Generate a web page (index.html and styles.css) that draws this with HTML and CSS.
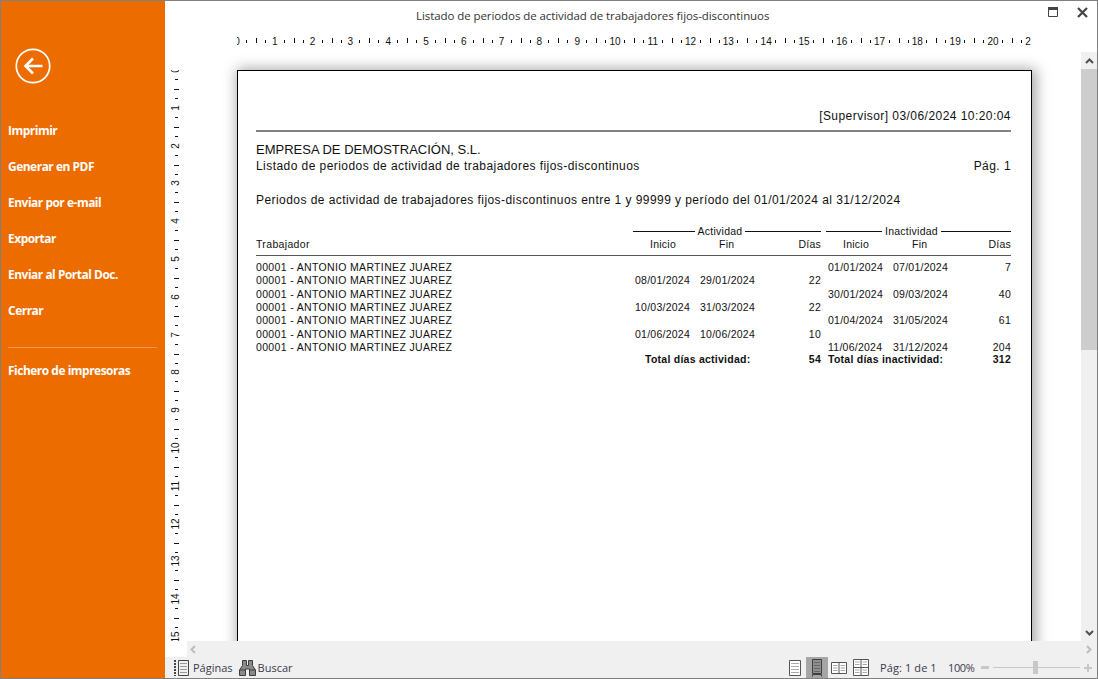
FILE: index.html
```html
<!DOCTYPE html>
<html lang="es">
<head>
<meta charset="utf-8">
<title>Listado de periodos</title>
<link rel="stylesheet" href="styles.css">
</head>
<body>
<div class="window">
  <aside class="sidebar">
    <button class="back" aria-label="Volver">
      <svg width="36" height="36" viewBox="0 0 36 36"><circle cx="18" cy="18" r="16.7" fill="none" stroke="#fff" stroke-width="1.7"/><path d="M27.5 18H10.5M18 10.5L10.5 18L18 25.5" fill="none" stroke="#fff" stroke-width="2.6"/></svg>
    </button>
    <nav class="menu">
      <a>Imprimir</a>
      <a>Generar en PDF</a>
      <a>Enviar por e-mail</a>
      <a>Exportar</a>
      <a>Enviar al Portal Doc.</a>
      <a>Cerrar</a>
      <hr class="menu-sep">
      <a>Fichero de impresoras</a>
    </nav>
  </aside>
  <main class="main">
    <header class="titlebar">
      <span class="title">Listado de periodos de actividad de trabajadores fijos-discontinuos</span>
      <div class="winbtns">
        <svg width="10" height="10" viewBox="0 0 10 10"><path d="M.5 .5H9.5V9.5H.5Z" fill="none" stroke="#444"/><path d="M0 0H10V3H0Z" fill="#444"/></svg>
        <svg width="11" height="11" viewBox="0 0 11 11"><path d="M1 1L10 10M10 1L1 10" stroke="#444" stroke-width="2.2"/></svg>
      </div>
    </header>
    <div class="hruler-row">
      <div class="hruler">
        <div class="cm"><span>0</span></div><div class="cm"><span>1</span></div><div class="cm"><span>2</span></div><div class="cm"><span>3</span></div><div class="cm"><span>4</span></div><div class="cm"><span>5</span></div><div class="cm"><span>6</span></div><div class="cm"><span>7</span></div><div class="cm"><span>8</span></div><div class="cm"><span>9</span></div><div class="cm"><span>10</span></div><div class="cm"><span>11</span></div><div class="cm"><span>12</span></div><div class="cm"><span>13</span></div><div class="cm"><span>14</span></div><div class="cm"><span>15</span></div><div class="cm"><span>16</span></div><div class="cm"><span>17</span></div><div class="cm"><span>18</span></div><div class="cm"><span>19</span></div><div class="cm"><span>20</span></div><div class="cm"><span>21</span></div>
      </div>
    </div>
    <div class="viewer">
      <div class="vruler">
        <div class="vcm"><span>0</span></div><div class="vcm"><span>1</span></div><div class="vcm"><span>2</span></div><div class="vcm"><span>3</span></div><div class="vcm"><span>4</span></div><div class="vcm"><span>5</span></div><div class="vcm"><span>6</span></div><div class="vcm"><span>7</span></div><div class="vcm"><span>8</span></div><div class="vcm"><span>9</span></div><div class="vcm"><span>10</span></div><div class="vcm"><span>11</span></div><div class="vcm"><span>12</span></div><div class="vcm"><span>13</span></div><div class="vcm"><span>14</span></div><div class="vcm"><span>15</span></div>
      </div>
      <section class="canvas">
        <article class="page">
          <div class="stamp">[Supervisor] 03/06/2024 10:20:04</div>
          <div class="company">EMPRESA DE DEMOSTRACIÓN, S.L.</div>
          <div class="listing"><span>Listado de periodos de actividad de trabajadores fijos-discontinuos</span><span>Pág. 1</span></div>
          <div class="subtitle">Periodos de actividad de trabajadores fijos-discontinuos entre 1 y 99999 y período del 01/01/2024 al 31/12/2024</div>
          <div class="table">
            <div class="groups">
              <div class="group group-a"><span>Actividad</span></div>
              <div class="group group-b"><span>Inactividad</span></div>
            </div>
            <div class="row head">
              <span>Trabajador</span>
              <span class="c">Inicio</span><span class="c fin">Fin</span><span class="r">Días</span><i></i>
              <span class="c">Inicio</span><span class="c fin">Fin</span><span class="r">Días</span>
            </div>
            <div class="rows">
              <div class="row"><span>00001 - ANTONIO MARTINEZ JUAREZ</span><span></span><span></span><span></span><i></i><span>01/01/2024</span><span>07/01/2024</span><span class="r">7</span></div>
              <div class="row"><span>00001 - ANTONIO MARTINEZ JUAREZ</span><span>08/01/2024</span><span>29/01/2024</span><span class="r">22</span><i></i><span></span><span></span><span></span></div>
              <div class="row"><span>00001 - ANTONIO MARTINEZ JUAREZ</span><span></span><span></span><span></span><i></i><span>30/01/2024</span><span>09/03/2024</span><span class="r">40</span></div>
              <div class="row"><span>00001 - ANTONIO MARTINEZ JUAREZ</span><span>10/03/2024</span><span>31/03/2024</span><span class="r">22</span><i></i><span></span><span></span><span></span></div>
              <div class="row"><span>00001 - ANTONIO MARTINEZ JUAREZ</span><span></span><span></span><span></span><i></i><span>01/04/2024</span><span>31/05/2024</span><span class="r">61</span></div>
              <div class="row"><span>00001 - ANTONIO MARTINEZ JUAREZ</span><span>01/06/2024</span><span>10/06/2024</span><span class="r">10</span><i></i><span></span><span></span><span></span></div>
              <div class="row"><span>00001 - ANTONIO MARTINEZ JUAREZ</span><span></span><span></span><span></span><i></i><span>11/06/2024</span><span>31/12/2024</span><span class="r">204</span></div>
            </div>
            <div class="totals">
              <span class="tot-a">Total días actividad:</span><span class="r">54</span><i></i>
              <span class="tot-b">Total días inactividad:</span><span class="r">312</span>
            </div>
          </div>
        </article>
      </section>
      <div class="vscroll">
        <div class="sbtn"><svg width="9" height="6" viewBox="0 0 9 6"><path d="M1 5L4.5 1.5L8 5" fill="none" stroke="#505050" stroke-width="2"/></svg></div>
        <div class="vtrack"><div class="vthumb"></div></div>
        <div class="sbtn"><svg width="9" height="6" viewBox="0 0 9 6"><path d="M1 1L4.5 4.5L8 1" fill="none" stroke="#505050" stroke-width="2"/></svg></div>
      </div>
    </div>
    <div class="hscroll-row">
      <div class="hscroll-gap"></div>
      <div class="hscroll">
        <svg width="6" height="9" viewBox="0 0 6 9"><path d="M5 1L1.5 4.5L5 8" fill="none" stroke="#bdbdbd" stroke-width="2"/></svg>
        <svg width="6" height="9" viewBox="0 0 6 9"><path d="M1 1L4.5 4.5L1 8" fill="none" stroke="#bdbdbd" stroke-width="2"/></svg>
      </div>
    </div>
    <footer class="status">
      <div class="tool pages-tool">
        <svg width="15" height="16" viewBox="0 0 15 16"><path d="M1 0V16" stroke="#444" stroke-width="2" stroke-dasharray="2 1"/><path d="M4.5 .5H14.5V15.5H4.5Z" fill="none" stroke="#444"/><path d="M6 3.5H13M6 6.500H13M6 9.500H13M6 12.500H13" stroke="#999"/></svg>
        <span>Páginas</span>
      </div>
      <div class="tool find-tool">
        <svg width="17" height="16" viewBox="0 0 17 16"><path d="M3.500 .5H7.500V5.500H9.500V.5H13.500V5.500L16.500 10V15.500H10.500V9H6.500V15.500H.5V10L3.500 5.500Z" fill="#8a8a8a" stroke="#3c3c3c"/><path d="M1 10H6M11 10H16" stroke="#3c3c3c"/></svg>
        <span>Buscar</span>
      </div>
      <div class="views">
        <div class="view">
          <svg width="12" height="16" viewBox="0 0 12 16"><path d="M.5 .5H11.500V15.500H.5Z" fill="#fff" stroke="#555"/><path d="M2 3.500H10M2 6.500H10M2 9.500H10M2 12.500H10" stroke="#aaa"/></svg>
        </div>
        <div class="view active">
          <svg width="10" height="18" viewBox="0 0 10 18"><path d="M.5 .5H9.500V14.500H.5Z" fill="#8f8f8f" stroke="#3e3e3e"/><path d="M2 3.500H8M2 6.500H8M2 9.500H8M2 12.500H8" stroke="#666"/><path d="M.5 17.500V15.500H9.500V17.500" fill="none" stroke="#3e3e3e"/></svg>
        </div>
        <div class="view">
          <svg width="16" height="12" viewBox="0 0 16 12"><path d="M.5 .5H15.500V11.500H.5ZM8 .5V11.500" fill="#fff" stroke="#555"/><path d="M2 3.500H6.500M2 6H6.500M2 8.500H6.500M9.500 3.500H14M9.500 6H14M9.500 8.500H14" stroke="#aaa"/></svg>
        </div>
        <div class="view">
          <svg width="16" height="17" viewBox="0 0 16 17"><path d="M.5 .5H15.500V16.500H.5ZM8 .5V16.500M.5 8.500H15.500" fill="#fff" stroke="#555"/><path d="M2 3H6.500M2 5.500H6.500M9.500 3H14M9.500 5.500H14M2 11H6.500M2 13.500H6.500M9.500 11H14M9.500 13.500H14" stroke="#aaa"/></svg>
        </div>
      </div>
      <span class="pageinfo">Pág: 1 de 1</span>
      <span class="zoomval">100%</span>
      <div class="zoomer">
        <div class="minus"></div>
        <div class="track"><div class="thumb"></div></div>
        <div class="plus"></div>
      </div>
    </footer>
  </main>
</div>
</body>
</html>
```
FILE: styles.css
```css
* { box-sizing: border-box; }
html, body { margin: 0; padding: 0; }
body { width: 1098px; height: 679px; overflow: hidden; background: #fff; font-family: "Liberation Sans", Arial, sans-serif; }
.window { width: 1098px; height: 679px; display: flex; border: 1px solid #808080; overflow: hidden; background: #fff; }

.sidebar { width: 164px; flex: none; background: #ed6c00; display: flex; flex-direction: column; padding-top: 47px; }
.back { width: 36px; height: 36px; margin-left: 14px; padding: 0; border: 0; background: none; display: block; }
.back svg { display: block; }
.menu { margin-top: 28px; padding: 0 7px; display: flex; flex-direction: column; }
.menu a { display: block; height: 36px; color: #fff; font: 700 11.900px/36px "Open Sans", sans-serif; letter-spacing: -.45px; white-space: nowrap; }
.menu-sep { border: 0; height: 1px; background: #f49a4e; margin: 18.500px 0 4.500px; width: 149px; }

.main { flex: 1; min-width: 0; display: flex; flex-direction: column; }
.titlebar { height: 29px; flex: none; display: flex; align-items: center; position: relative; }
.title { position: absolute; left: 251px; top: 6px; font: 400 11.500px/18px "Open Sans", sans-serif; letter-spacing: -.075px; color: #333; white-space: nowrap; }
.winbtns { margin-left: auto; display: flex; align-items: flex-start; gap: 19px; padding-right: 9px; margin-top: -6px; }
.winbtns svg { display: block; }

.hruler-row { height: 22px; flex: none; padding-left: 72px; }
.hruler { width: 794px; height: 22px; display: flex; overflow: hidden; }
.cm { flex: none; width: 37.8px; height: 22px; position: relative; font-size: 10px; color: #111;
  background:
    linear-gradient(#111,#111) 9px 10px / 1px 3px no-repeat,
    linear-gradient(#111,#111) 19px 8px / 1px 5px no-repeat,
    linear-gradient(#111,#111) 28px 10px / 1px 3px no-repeat; }
.cm span { position: absolute; left: 0; top: 6px; line-height: 12px; transform: translateX(-50%); }

.viewer { flex: 1; min-height: 0; display: flex; overflow: hidden; }
.vruler { width: 22px; flex: none; margin-top: 18px; display: flex; flex-direction: column; overflow: hidden; }
.vcm { flex: none; width: 22px; height: 37.8px; position: relative; font-size: 10px; color: #111;
  background:
    linear-gradient(#111,#111) 10px 9px / 3px 1px no-repeat,
    linear-gradient(#111,#111) 9px 19px / 5px 1px no-repeat,
    linear-gradient(#111,#111) 10px 28px / 3px 1px no-repeat; }
.vcm span { position: absolute; left: 11px; top: 0; line-height: 12px; transform: translate(-50%,-50%) rotate(-90deg); white-space: nowrap; }

.canvas { flex: 1; min-width: 0; padding: 18px 0 0 50px; overflow: hidden; }
.page { width: 795px; height: 1123px; background: #fff; border: 1px solid #000; box-shadow: 2px 1px 13px 2px rgba(0,0,0,.36); padding: 0 20px 0 18px; color: #111; }

.stamp { margin-top: 36px; height: 18px; line-height: 18px; font-size: 12px; text-align: right; letter-spacing: .45px; white-space: nowrap; }
.company { margin-top: 5px; border-top: 2px solid #808080; padding-top: 9px; height: 29px; line-height: 18px; font-size: 13px; }
.listing { display: flex; justify-content: space-between; height: 18px; line-height: 18px; font-size: 12px; margin-top: -2px; letter-spacing: .44px; white-space: nowrap; }
.subtitle { margin-top: 16px; height: 18px; line-height: 18px; font-size: 12px; letter-spacing: .44px; white-space: nowrap; }

.table { margin-top: 16px; font-size: 10.500px; letter-spacing: .25px; }
.groups { height: 13px; position: relative; }
.group { position: absolute; top: 0; height: 13px; line-height: 13px; text-align: center; padding-right: 14px; background: linear-gradient(#111,#111) 0 6px / 100% 1px no-repeat; }
.group span { background: #fff; padding: 0 3px; }
.group-a { left: 377px; width: 188px; }
.group-b { left: 570px; width: 185px; }
.row { display: grid; grid-template-columns: 379px 65px 60px 61px 7px 65px 60px 58px; height: 13.330px; line-height: 13.330px; white-space: nowrap; }
.row > span:first-child { letter-spacing: .34px; }
.row i, .totals i { display: block; }
.row .r, .totals .r { text-align: right; }
.row.head { height: 17px; line-height: 12px; }
.row.head .c { text-align: left; padding-left: 15px; }
.row.head .fin { padding-left: 19px; }
.rows { border-top: 1.500px solid #555; margin-top: -.5px; padding-top: 5.400px; }
.totals { display: grid; grid-template-columns: 379px 125px 61px 7px 125px 58px; height: 13px; line-height: 13px; font-weight: 700; white-space: nowrap; margin-top: -1.700px; }
.tot-a { grid-column: 2; padding-left: 10px; }

.vscroll { width: 16px; flex: none; background: #f0f0f0; display: flex; flex-direction: column; }
.sbtn { height: 17px; flex: none; display: flex; align-items: center; justify-content: center; }
.vtrack { flex: 1; }
.vthumb { height: 281px; background: #cdcdcd; }

.hscroll-row { height: 16px; flex: none; display: flex; }
.hscroll-gap { width: 22px; flex: none; }
.hscroll { flex: 1; background: #f0f0f0; display: flex; align-items: center; justify-content: space-between; padding: 0 5px 0 3px; }
.status { height: 21px; flex: none; background: #f0f0f0; display: flex; align-items: center; padding-left: 9px; font: 400 11px/21px "Open Sans", sans-serif; color: #3a3a4a; white-space: nowrap; }
.tool { display: flex; align-items: center; gap: 4px; }
.tool svg { display: block; }
.find-tool { margin-left: 6px; gap: 2px; }
.views { margin-left: auto; display: flex; align-items: center; height: 21px; }
.view { width: 22px; height: 21px; display: flex; align-items: center; justify-content: center; }
.view.active { background: #a6a6a6; }
.pageinfo { margin-left: 8px; width: 68px; letter-spacing: .1px; }
.zoomval { width: 33px; letter-spacing: -.4px; }
.zoomer { display: flex; align-items: center; width: 116px; padding-right: 5px; }
.minus { width: 8px; height: 3px; background: #c8c8c8; flex: none; }
.track { width: 87px; height: 1px; margin: 0 4px; background: #c8c8c8; position: relative; flex: none; }
.thumb { position: absolute; left: 40px; top: -6px; width: 5px; height: 13px; background: #c8c8c8; }
.plus { width: 8px; height: 8px; flex: none; background: linear-gradient(#c8c8c8,#c8c8c8) center / 100% 2px no-repeat, linear-gradient(#c8c8c8,#c8c8c8) center / 2px 100% no-repeat; }
```
